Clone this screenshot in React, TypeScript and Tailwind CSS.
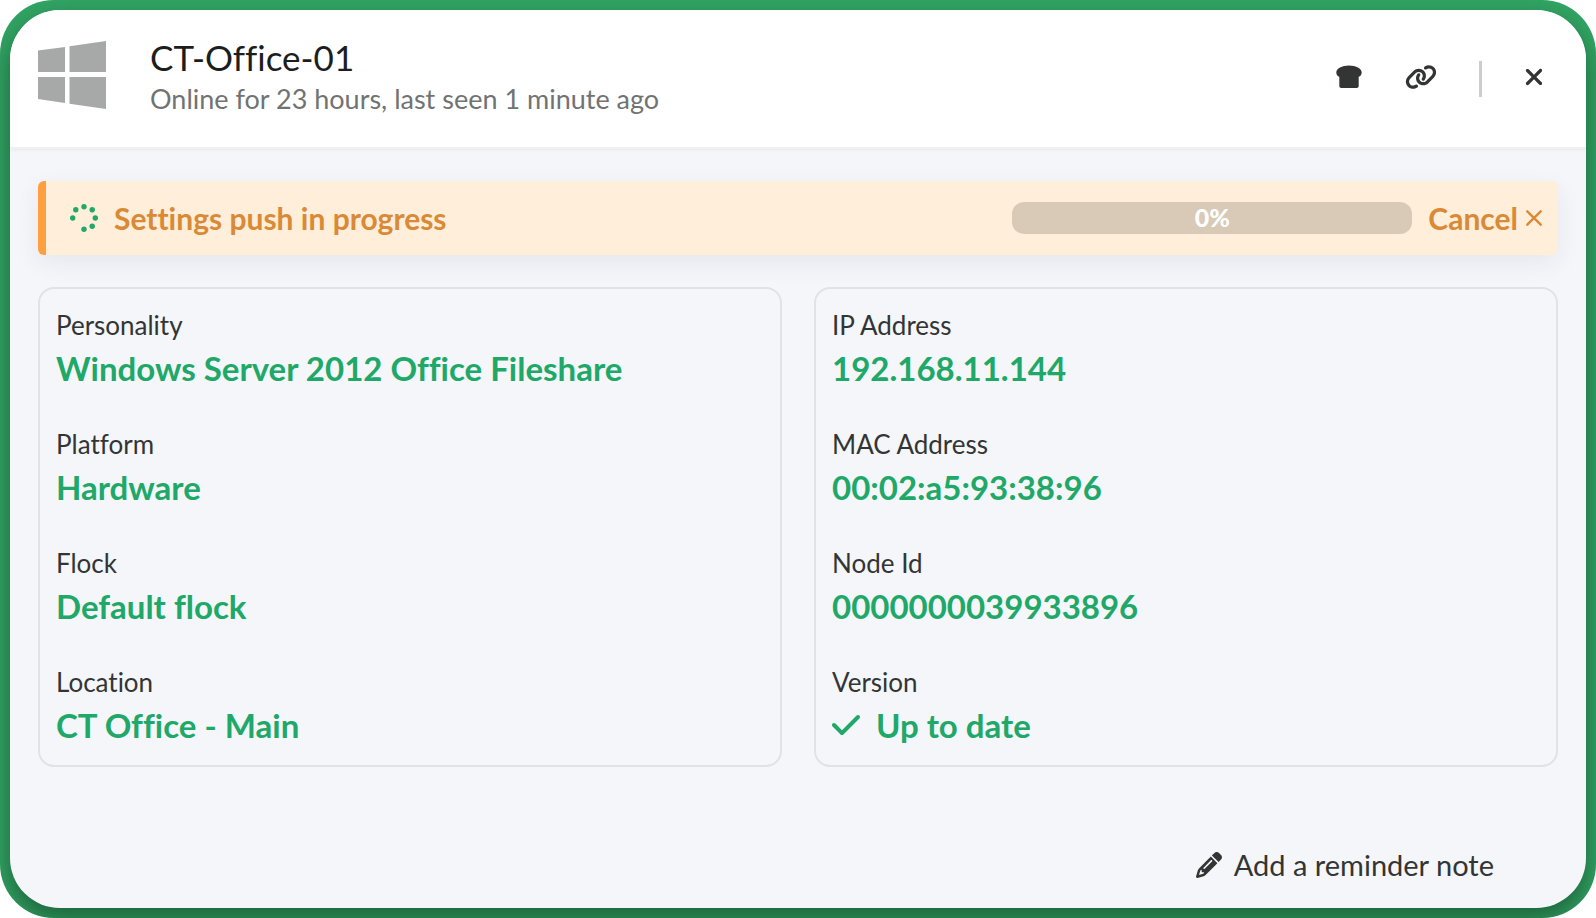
import { FaCheck, FaLink, FaPencil, FaXmark } from "react-icons/fa6";

type Field = { label: string; value: string; check?: boolean };

const identity: Field[] = [
  { label: "Personality", value: "Windows Server 2012 Office Fileshare" },
  { label: "Platform", value: "Hardware" },
  { label: "Flock", value: "Default flock" },
  { label: "Location", value: "CT Office - Main" },
];

const network: Field[] = [
  { label: "IP Address", value: "192.168.11.144" },
  { label: "MAC Address", value: "00:02:a5:93:38:96" },
  { label: "Node Id", value: "0000000039933896" },
  { label: "Version", value: "Up to date", check: true },
];

function WindowsLogo() {
  return (
    <svg viewBox="0 0 68 68" className="size-17 shrink-0 fill-[#a7a9a8]" aria-hidden="true">
      <path d="M0 9.5 27 6v25H0zM31.500 5.300 68 0v31H31.500zM0 36h27v26L0 58zM31.500 36H68v32l-36.500-5.300z" />
    </svg>
  );
}

function BreadIcon() {
  return (
    <svg viewBox="0 0 26 24" className="h-6 w-7 fill-[#333534]" aria-hidden="true">
      <path d="M13 .5C20 .5 25.700 3.500 25.700 7.500c0 2.200-1.200 3.800-3 4.200V21c0 1.200-.8 2-2 2H5.300c-1.200 0-2-.8-2-2v-9.300c-1.800-.4-3-2-3-4.200C.3 3.500 6 .5 13 .5z" />
    </svg>
  );
}

function CrossIcon() {
  return (
    <svg viewBox="0 0 16 16" className="size-4 fill-none stroke-current" strokeWidth="2.400" strokeLinecap="round" aria-hidden="true">
      <path d="M1.300 1.300l13.400 13.400M14.700 1.300L1.300 14.700" />
    </svg>
  );
}

function Spinner() {
  return (
    <svg viewBox="0 0 28 28" className="size-7 shrink-0 fill-[#20a868]" aria-hidden="true">
      <circle cx="14" cy="2.700" r="2.700" />
      <circle cx="22.200" cy="5.800" r="2.700" />
      <circle cx="25.300" cy="14" r="2.700" />
      <circle cx="22.200" cy="22.200" r="2.700" />
      <circle cx="14" cy="25.300" r="2.700" />
      <circle cx="5.800" cy="5.800" r="2.700" />
      <circle cx="2.700" cy="14" r="2.700" />
    </svg>
  );
}

function FieldCard({ fields }: { fields: Field[] }) {
  return (
    <dl className="flex flex-col gap-[33px] rounded-2xl border-2 border-[#e1e2e4] px-4 pt-[17px] pb-4">
      {fields.map((field) => (
        <div key={field.label}>
          <dt className="text-[26px] leading-[38px] text-[#333534]">{field.label}</dt>
          <dd className="flex items-center gap-4 text-[33px] leading-12 font-bold text-[#20a868]">
            {field.check && <FaCheck className="h-8 w-7" aria-hidden="true" />}
            {field.value}
          </dd>
        </div>
      ))}
    </dl>
  );
}

export default function App() {
  return (
    <div className="bg-white font-['Lato',sans-serif] [font-variant-ligatures:none]">
      <div className="flex min-h-screen flex-col overflow-hidden rounded-[54px] bg-[#31a463] p-[10px]">
        <main className="flex grow flex-col overflow-hidden rounded-[50px] bg-[#f4f6fa] shadow-[0_12px_26px_rgba(0,0,0,0.4)]">
          <header className="flex items-center border-b-2 border-[#eff0f1] bg-white px-7 pt-[25px] pb-7 shadow-[0_1px_3px_rgba(0,0,0,0.05)]">
            <div className="self-start pt-1.5">
              <WindowsLogo />
            </div>
            <div className="ml-11 grow">
              <h1 className="text-[35px] leading-11 text-[#1c1d1d]">CT-Office-01</h1>
              <p className="text-[27px] leading-10 text-[#717373]">Online for 23 hours, last seen 1 minute ago</p>
            </div>
            <button type="button" aria-label="Bird"><BreadIcon /></button>
            <button type="button" aria-label="Link" className="ml-[42px] text-[#333534]">
              <FaLink className="h-[26px] w-8" />
            </button>
            <span className="mt-1 mr-10 ml-[42px] h-9 w-[3px] bg-[#cdcdcd]" />
            <button type="button" aria-label="Close" className="mr-3 text-[#333534]">
              <FaXmark className="h-[26px] w-6" />
            </button>
          </header>

          <div className="flex grow flex-col px-7 pt-8 pb-[21px]">
            <section className="flex h-[74px] items-center rounded-md border-l-8 border-[#ff9f3f] bg-[#ffeeda] pr-4 pl-6 text-[30px] font-bold text-[#d98a36] shadow-[0_8px_24px_rgba(40,40,60,0.07)]">
              <Spinner />
              <p className="ml-4 grow">Settings push in progress</p>
              <div role="progressbar" aria-label="Settings push" aria-valuenow={0} className="mr-4 flex h-8 w-[400px] items-center justify-center rounded-xl bg-[#d9cab7] text-[25px] font-black text-white">
                0%
              </div>
              <button type="button" className="flex items-center gap-2">
                Cancel
                <CrossIcon />
              </button>
            </section>

            <div className="mt-8 grid grid-cols-2 gap-8">
              <FieldCard fields={identity} />
              <FieldCard fields={network} />
            </div>

            <button type="button" className="mt-auto mr-16 flex items-center gap-3 self-end text-[29px] leading-11 text-[#333534]">
              <FaPencil className="size-[26px]" aria-hidden="true" />
              Add a reminder note
            </button>
          </div>
        </main>
      </div>
    </div>
  );
}
